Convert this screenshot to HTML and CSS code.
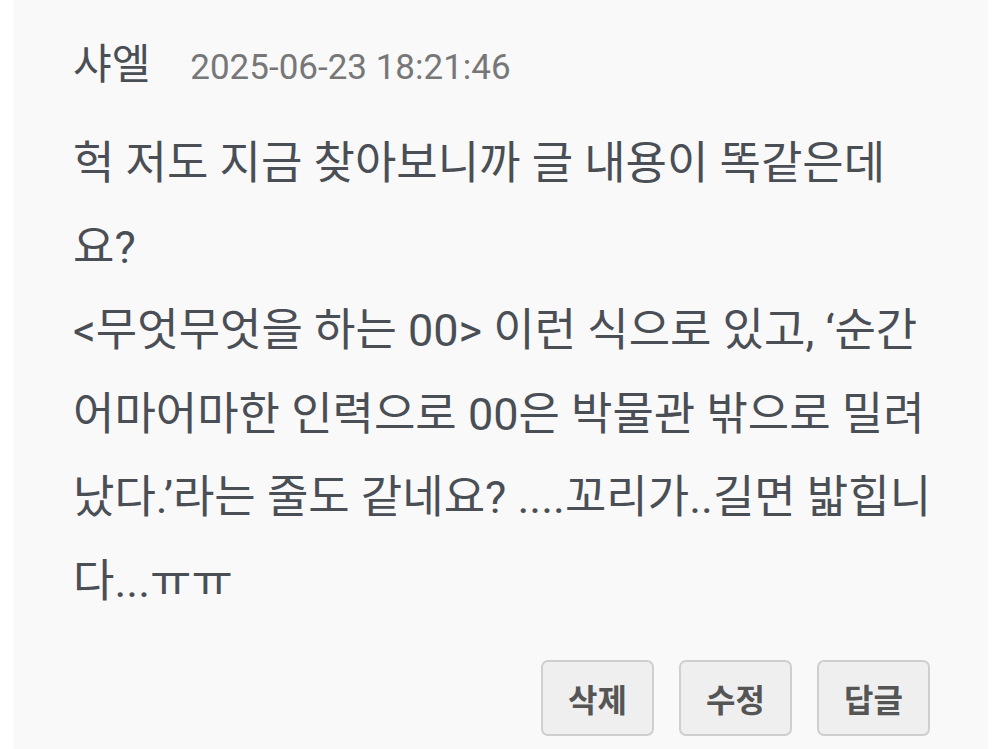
FILE: index.html
```html
<!DOCTYPE html>
<html lang="ko">
<head>
<meta charset="utf-8">
<link rel="stylesheet" href="styles.css">
</head>
<body>
<div class="card">
  <div class="meta">
    <span class="name">샤엘</span>
    <span class="date">2025-06-23 18:21:46</span>
  </div>
  <p class="body">헉 저도 지금 찾아보니까 글 내용이 똑같은데요?<br>&lt;무엇무엇을 하는 00&gt; 이런 식으로 있고, ‘순간 어마어마한 인력으로 00은 박물관 밖으로 밀려났다.’라는 줄도 같네요? ....꼬리가..길면 밟힙니다...ㅠㅠ</p>
  <div class="actions">
    <button class="btn">삭제</button>
    <button class="btn">수정</button>
    <button class="btn">답글</button>
  </div>
</div>
</body>
</html>
```

FILE: styles.css
```css
html, body {
  margin: 0;
  padding: 0;
  background: #ffffff;
}
body {
  font-family: Roboto, "Noto Sans CJK KR", sans-serif;
  color: #4a4e55;
  height: 749px;
  overflow: hidden;
}
.card {
  margin: 0 12px 0 13px;
  background: #f9f9f9;
  height: 749px;
  padding: 30px 0 0 60px;
  box-sizing: border-box;
}
.meta {
  display: flex;
  align-items: baseline;
  gap: 40px;
  height: 62px;
}
.name {
  font-size: 42px;
  font-weight: 400;
  color: #4a4e55;
}
.date {
  font-size: 35px;
  color: #777777;
}
.body {
  margin: 30px 0 0 0;
  width: 866px;
  font-size: 45px;
  line-height: 83.6px;
  color: #4a4e55;
}
.actions {
  display: flex;
  justify-content: flex-end;
  gap: 25px;
  padding-right: 58px;
  margin-top: 36px;
}
.btn {
  width: 113px;
  height: 76px;
  border: 2px solid #cfcfcf;
  border-radius: 7px;
  background: #efefef;
  font-family: Roboto, "Noto Sans CJK KR", sans-serif;
  font-size: 32px;
  font-weight: 700;
  color: #555555;
  padding: 0;
}
```
